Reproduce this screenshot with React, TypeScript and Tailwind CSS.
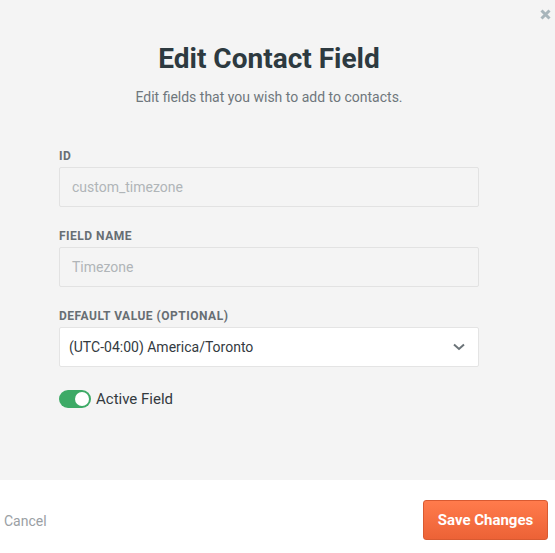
import React, { useState } from "react";

function Field({ label, children }: { label: string; children: React.ReactNode }) {
  return (
    <div className="mb-[21px]">
      <label className="mb-[3px] block text-[12px] font-bold uppercase leading-4 tracking-[0.5px] text-[#676e73]">
        {label}
      </label>
      {children}
    </div>
  );
}

export default function App() {
  const [active, setActive] = useState(true);

  return (
    <div className="flex h-[553px] w-[555px] flex-col bg-[#f4f4f4] font-['Roboto',sans-serif]">
      {/* Body */}
      <div className="relative h-[480px] w-[538px]">
        <button className="absolute left-[540px] top-[9px] text-[#a8b5bb]">
          <svg width="11" height="11" viewBox="0 0 11 11">
            <path d="M1.5 1.5 L9.5 9.5 M9.5 1.5 L1.5 9.5" stroke="currentColor" strokeWidth="3" />
          </svg>
        </button>

        <div className="pt-[42px] text-center">
          <h1 className="text-[28px] font-bold leading-[34px] text-[#2d3a40]">Edit Contact Field</h1>
          <p className="mt-[11px] text-[14px] leading-5 text-[#6f777c]">
            Edit fields that you wish to add to contacts.
          </p>
        </div>

        <div className="mt-[41px] px-[59px]">
          <Field label="ID">
            <div className="flex h-10 items-center rounded-[2px] border border-[#e2e2e2] px-3 text-[14px] text-[#b0b5b8]">
              custom_timezone
            </div>
          </Field>
          <Field label="Field Name">
            <div className="flex h-10 items-center rounded-[2px] border border-[#e2e2e2] px-3 text-[14px] text-[#b0b5b8]">
              Timezone
            </div>
          </Field>
          <Field label="Default Value (Optional)">
            <div className="flex h-10 items-center justify-between rounded-[2px] border border-[#e4e4e4] bg-white pl-[9px] pr-[13px] text-[14px] text-[#333a3f]">
              <span>(UTC-04:00) America/Toronto</span>
              <svg width="12" height="8" viewBox="0 0 12 8">
                <path d="M1 1.5 L6 6 L11 1.5" fill="none" stroke="#6b7378" strokeWidth="2" />
              </svg>
            </div>
          </Field>

          <div className="mt-[20px] flex items-center gap-[5px]">
            <button
              onClick={() => setActive(!active)}
              className={`flex h-[18px] w-8 items-center rounded-full px-[2px] ${
                active ? "justify-end bg-[#3daa66]" : "justify-start bg-[#c8cdd0]"
              }`}
            >
              <span className="h-[14px] w-[14px] rounded-full bg-white" />
            </button>
            <span className="text-[15px] text-[#333a3f]">Active Field</span>
          </div>
        </div>
      </div>

      {/* Footer */}
      <div className="flex flex-1 items-start justify-between bg-white pl-1 pr-[7px] pt-5">
        <button className="mt-[11px] text-[14px] text-[#9aa0a4]">Cancel</button>
        <button className="h-10 w-[125px] rounded-[3px] border border-[#d95a31] bg-gradient-to-b from-[#ff7b4c] to-[#ec6236] text-[15px] font-bold text-white">
          Save Changes
        </button>
      </div>
    </div>
  );
}
